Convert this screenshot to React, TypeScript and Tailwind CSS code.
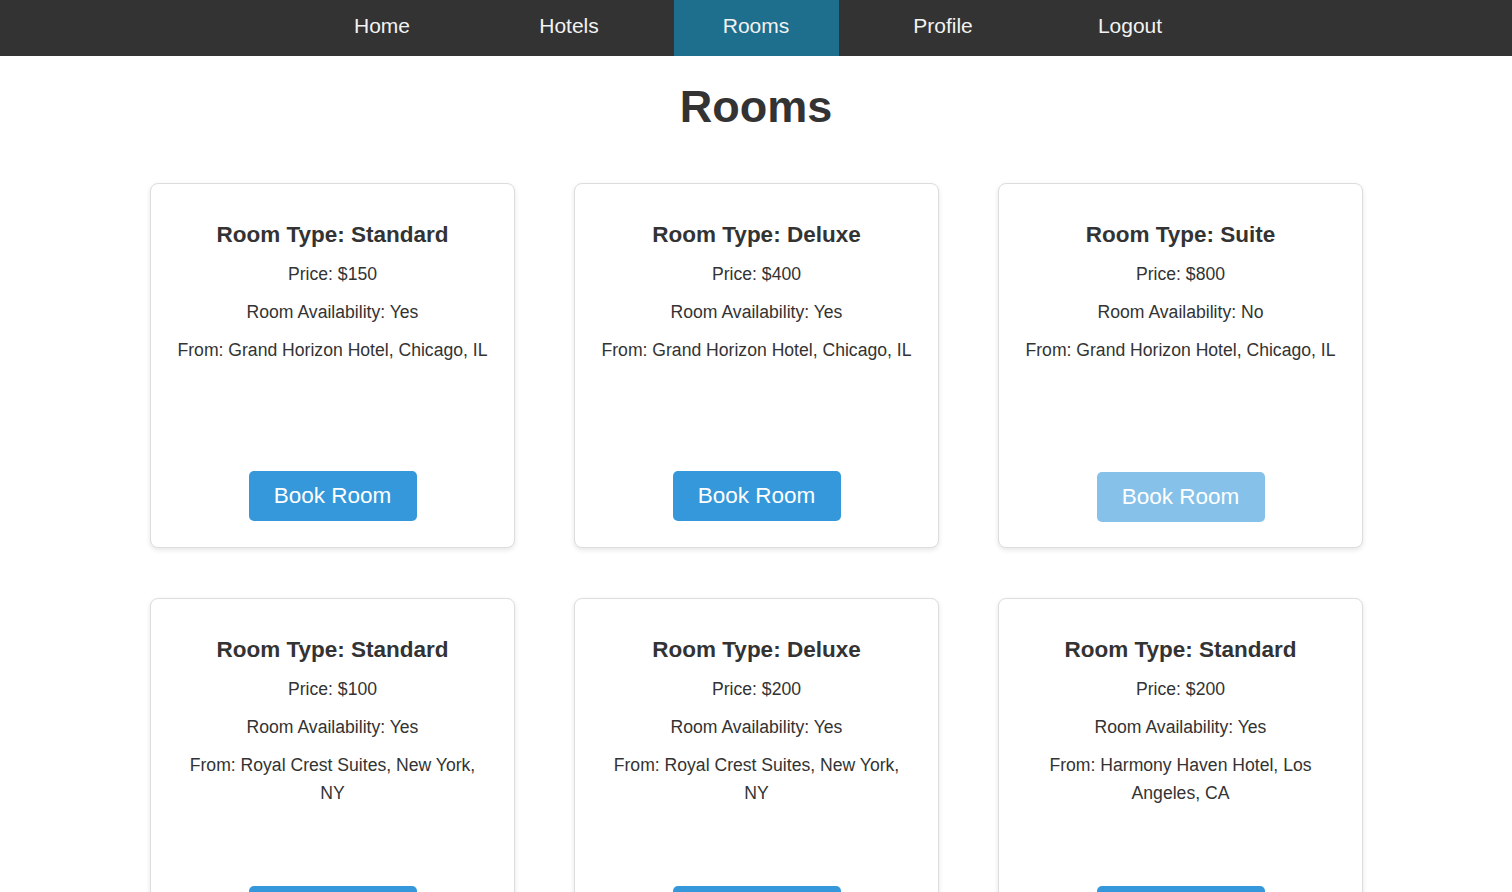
import React from 'react';

type Room = {
  type: string;
  price: number;
  available: boolean;
  hotel: string;
};

const rooms: Room[] = [
  { type: 'Standard', price: 150, available: true, hotel: 'Grand Horizon Hotel, Chicago, IL' },
  { type: 'Deluxe', price: 400, available: true, hotel: 'Grand Horizon Hotel, Chicago, IL' },
  { type: 'Suite', price: 800, available: false, hotel: 'Grand Horizon Hotel, Chicago, IL' },
  { type: 'Standard', price: 100, available: true, hotel: 'Royal Crest Suites, New York, NY' },
  { type: 'Deluxe', price: 200, available: true, hotel: 'Royal Crest Suites, New York, NY' },
  { type: 'Standard', price: 200, available: true, hotel: 'Harmony Haven Hotel, Los Angeles, CA' },
];

const navLinks = ['Home', 'Hotels', 'Rooms', 'Profile', 'Logout'];

const RoomCard: React.FC<{ room: Room }> = ({ room }) => (
  <div className="flex h-[365px] w-[365px] flex-col items-center rounded-lg border border-[#ddd] bg-white px-[25px] pt-5 pb-[26px] text-center shadow-[0_2px_5px_rgba(0,0,0,0.1)]">
    <h3 className="mt-[17px] mb-[11px] text-[22.5px] font-bold leading-7 text-[#333]">
      Room Type: {room.type}
    </h3>
    <p className="mb-[10px] text-[17.6px] leading-7 text-[#333]">Price: ${room.price}</p>
    <p className="mb-[10px] text-[17.6px] leading-7 text-[#333]">
      Room Availability: {room.available ? 'Yes' : 'No'}
    </p>
    <p className="mb-[10px] text-[17.6px] leading-7 text-[#333]">From: {room.hotel}</p>
    <button
      disabled={!room.available}
      className={
        room.available
          ? 'mt-auto h-[50px] w-[168px] rounded-[5px] bg-[#3498db] text-[22.5px] text-white'
          : 'mt-auto h-[50px] w-[168px] translate-y-[1px] rounded-[5px] bg-[#85c1e9] text-[22.5px] text-white'
      }
    >
      Book Room
    </button>
  </div>
);

const App: React.FC = () => {
  return (
    <div className="min-h-screen bg-white font-['Liberation_Sans',Arial,sans-serif] text-[#333]">
      {/* Top navigation */}
      <nav className="flex h-14 justify-center gap-[22px] bg-[#333]">
        {navLinks.map((link) => (
          <a
            key={link}
            href="#"
            className={
              link === 'Rooms'
                ? 'flex w-[165px] items-center justify-center bg-[#1e6e8e] pb-[4px] text-[21px] text-[#f2f2f2]'
                : 'flex w-[165px] items-center justify-center pb-[4px] text-[21px] text-[#f2f2f2]'
            }
          >
            {link}
          </a>
        ))}
      </nav>

      <h1 className="mt-[26px] text-center text-[45px] font-bold leading-[50px] text-[#333]">Rooms</h1>

      <div className="mt-[51px] ml-[150px] grid w-[1213px] grid-cols-3 gap-x-[59px] gap-y-[50px]">
        {rooms.map((room, i) => (
          <RoomCard key={i} room={room} />
        ))}
      </div>
    </div>
  );
};

export default App;
